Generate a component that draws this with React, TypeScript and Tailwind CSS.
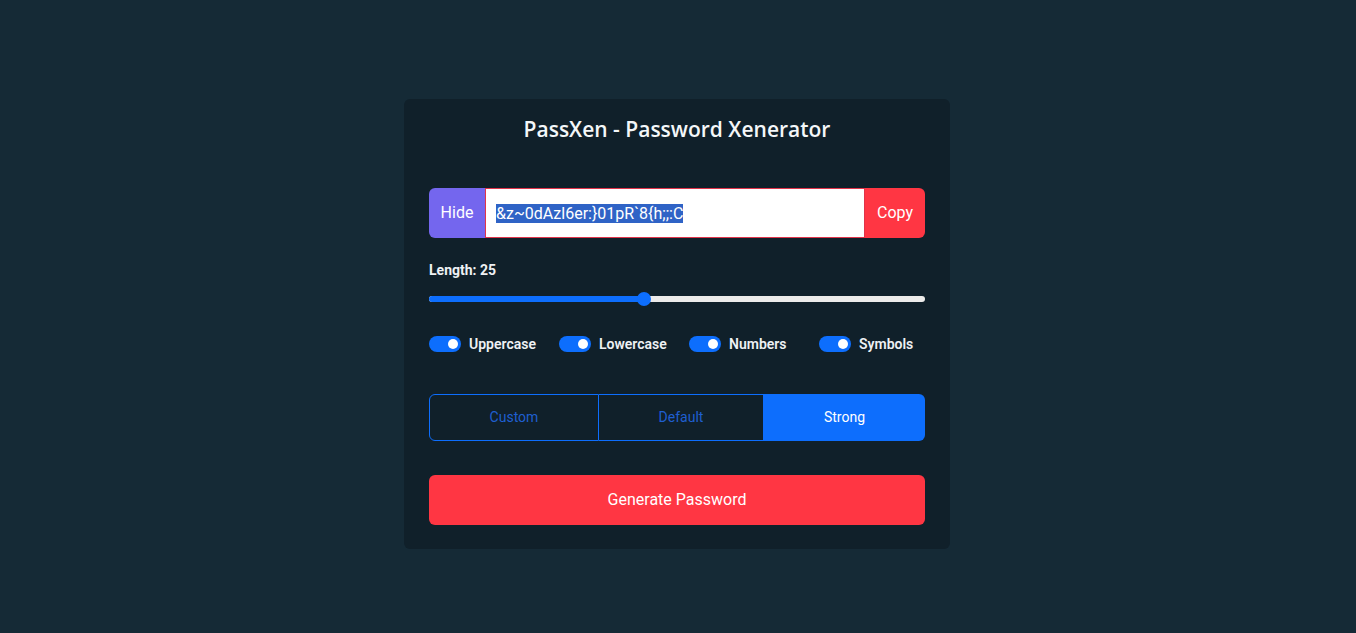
const options = ["Uppercase", "Lowercase", "Numbers", "Symbols"];
const password = "&z~0dAzl6er:}01pR`8{h;;:C";

const Toggle = ({ label }: { label: string }) => (
  <div className="flex items-center w-[130px] shrink-0 last:w-auto">
    <div className="relative w-8 h-4 rounded-full bg-[#0d6efd]">
      <div className="absolute right-[3px] top-[3px] w-[10px] h-[10px] rounded-full bg-white" />
    </div>
    <span className="ml-2 text-[14px] font-semibold text-[#eef1f4] translate-y-[1px]">{label}</span>
  </div>
);

export default function App() {
  return (
    <div
      className="w-full min-h-[633px] bg-[#152a36] flex justify-center pt-[99px]"
      style={{ fontFamily: "Roboto, 'Liberation Sans', sans-serif" }}
    >
      <div className="w-[546px] h-[450px] mr-[2px] bg-[#10202a] rounded-md px-[25px] flex flex-col">
        <h1
          className="text-center text-[21px] font-semibold text-[#f4f7f9] mt-[15px] leading-[30px]"
          style={{ fontFamily: "'Open Sans', Roboto, sans-serif" }}
        >
          PassXen - Password Xenerator
        </h1>

        <div className="flex h-[50px] mt-[44px]">
          <button className="w-[56px] bg-[#7466ee] text-white text-[16px] rounded-l-md">Hide</button>
          <div className="flex-1 bg-white border border-[#e0344a] flex items-center px-[10px]">
            <span className="bg-[#2f63c6] text-white text-[16px] leading-[19px]">{password}</span>
          </div>
          <button className="w-[60px] bg-[#ff3643] text-white text-[16px] rounded-r-md">Copy</button>
        </div>

        <div className="mt-[24px] text-[14px] font-bold text-[#eef1f4] leading-[16px]">Length: 25</div>
        <div className="relative mt-[14px] h-[14px] flex items-center">
          <div className="w-full h-[6px] rounded-full bg-[#ecebea] overflow-hidden">
            <div className="h-full w-[43%] bg-[#0d6efd]" />
          </div>
          <div className="absolute left-[208px] top-0 w-[14px] h-[14px] rounded-full bg-[#0d6efd]" />
        </div>

        <div className="flex mt-[27px]">
          {options.map((o) => (
            <Toggle key={o} label={o} />
          ))}
        </div>

        <div className="flex h-[47px] mt-[40px] text-[14px]">
          <button className="w-[170px] border border-[#0d6efd] rounded-l-md text-[#1f5fd0]">Custom</button>
          <button className="w-[165px] border-y border-r border-[#0d6efd] text-[#1f5fd0]">Default</button>
          <button className="flex-1 bg-[#0d6efd] text-white rounded-r-md">Strong</button>
        </div>

        <button className="mt-[34px] h-[50px] w-full rounded-md bg-[#ff3643] text-white text-[16px]">
          Generate Password
        </button>
      </div>
    </div>
  );
}
